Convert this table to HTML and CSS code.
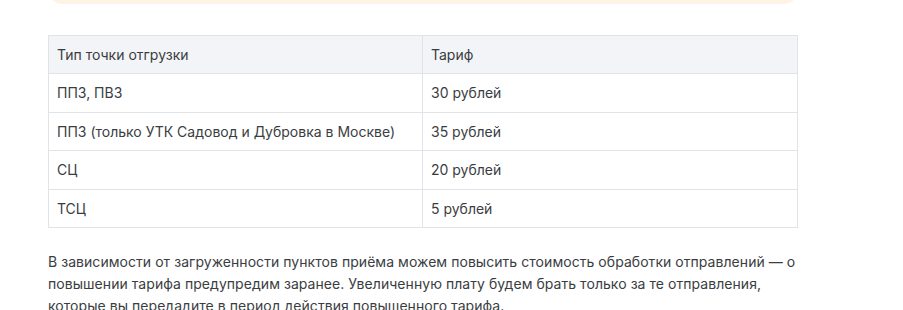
FILE: index.html
```html
<!DOCTYPE html>
<html lang="ru">
<head>
<meta charset="utf-8">
<link rel="stylesheet" href="styles.css">
</head>
<body>
<div class="page">
  <div class="notice"></div>
  <table class="tariffs">
    <thead>
      <tr><th class="col-type">Тип точки отгрузки</th><th>Тариф</th></tr>
    </thead>
    <tbody>
      <tr><td>ППЗ, ПВЗ</td><td>30 рублей</td></tr>
      <tr><td>ППЗ (только УТК Садовод и Дубровка в Москве)</td><td>35 рублей</td></tr>
      <tr><td>СЦ</td><td>20 рублей</td></tr>
      <tr><td>ТСЦ</td><td>5 рублей</td></tr>
    </tbody>
  </table>
  <p class="text">В зависимости от загруженности пунктов приёма можем повысить стоимость обработки отправлений — о повышении тарифа предупредим заранее. Увеличенную плату будем брать только за те отправления, которые вы передадите в период действия повышенного тарифа.</p>
</div>
</body>
</html>
```
FILE: styles.css
```css
html, body {
  margin: 0;
  padding: 0;
  background: #ffffff;
}
body {
  font-family: Inter, "Noto Sans", "Liberation Sans", sans-serif;
  color: #3a3d42;
  overflow: hidden;
}
.page {
  width: 750px;
  margin-left: 48px;
}
.notice {
  height: 44px;
  margin-top: -40px;
  background: #fef4e4;
  border-radius: 14px;
}
.tariffs {
  margin-top: 31px;
  width: 750px;
  border-collapse: collapse;
  font-size: 14px;
}
.tariffs th,
.tariffs td {
  border: 1px solid #e0e4e9;
  padding: 8px 8px;
  line-height: 21.4px;
  text-align: left;
  font-weight: 400;
}
.tariffs th {
  background: #f2f4f7;
}
.col-type {
  width: 357px;
}
.text {
  margin: 23px 0 0;
  font-size: 14px;
  line-height: 22px;
  letter-spacing: 0.05px;
}
```
